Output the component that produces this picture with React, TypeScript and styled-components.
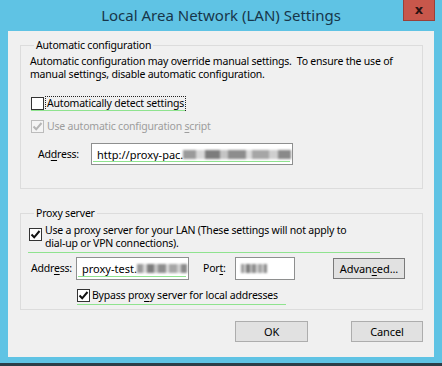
import React from 'react';
import styled, { createGlobalStyle, css } from 'styled-components';

const GlobalStyle = createGlobalStyle`
  html, body {
    margin: 0;
    padding: 0;
    background: #5fc3e4;
  }
  body {
    font-family: "Noto Sans", "Open Sans", sans-serif;
  }
`;

const Window = styled.div`
  width: 442px;
  height: 366px;
  box-sizing: border-box;
  background: #5fc3e4;
  border-bottom: 3px solid #2c3e48;
  display: flex;
  flex-direction: column;
`;

const TitleBar = styled.div`
  height: 31px;
  flex-shrink: 0;
  display: grid;
  grid-template-columns: 1fr auto 1fr;
  align-items: start;
`;

const Title = styled.h1`
  grid-column: 2;
  margin: 0;
  padding-top: 6px;
  font-size: 15px;
  line-height: 18px;
  font-weight: normal;
  color: #17364a;
  white-space: nowrap;
`;

const CloseButton = styled.button`
  grid-column: 3;
  justify-self: end;
  margin: 0 7px 0 0;
  width: 32px;
  height: 21px;
  padding: 0;
  border: 1px solid #9a4038;
  border-top: none;
  background: #c8574b;
  color: #2a1212;
  font: bold 13px/18px "DejaVu Sans", sans-serif;
`;

const Client = styled.div`
  margin: 0 8px;
  height: 326px;
  flex-shrink: 0;
  box-sizing: border-box;
  background: #f0f0f0;
  padding: 8px 11px 0 12px;
  display: flex;
  flex-direction: column;
  font-size: 10.5px;
  letter-spacing: -0.2px;
  line-height: 13px;
  color: #000;
`;

const Group = styled.fieldset<{ $top?: number; $padTop: number; $padBottom: number }>`
  margin: ${(p) => p.$top ?? 0}px 0 0 0;
  min-width: 0;
  border: 1px solid #dcdcdc;
  padding: ${(p) => p.$padTop}px 8px ${(p) => p.$padBottom}px 8px;
  display: flex;
  flex-direction: column;
`;

const Legend = styled.legend`
  margin-left: 5px;
  padding: 0 2px;
  line-height: 13px;
`;

const Description = styled.p`
  margin: 0 0 0 1px;
  white-space: pre;
`;

const Row = styled.div<{ $top: number; $indent?: number; $align?: string }>`
  display: flex;
  align-items: ${(p) => p.$align ?? 'center'};
  margin-top: ${(p) => p.$top}px;
  margin-left: ${(p) => p.$indent ?? 0}px;
`;

// green hand-drawn marks lying over the screenshot
const Marked = styled.div<{ $left: number; $right: number; $bottom: number }>`
  position: relative;
  align-self: flex-start;
  &::after {
    content: '';
    position: absolute;
    left: ${(p) => p.$left}px;
    right: ${(p) => p.$right}px;
    bottom: ${(p) => p.$bottom}px;
    height: 1px;
    background: #8fe38f;
  }
`;

const Box = styled.span<{ $disabled?: boolean; $top?: number }>`
  flex-shrink: 0;
  width: 13px;
  height: 13px;
  box-sizing: border-box;
  margin-top: ${(p) => p.$top ?? 0}px;
  border: 1px solid #333;
  background: #fff;
  display: flex;
  align-items: center;
  justify-content: center;
  ${(p) =>
    p.$disabled &&
    css`
      border-color: #bcbcbc;
      background: #f4f4f4;
    `}
`;

const CheckLabel = styled.span<{ $disabled?: boolean; $focused?: boolean; $gap: number }>`
  margin-left: ${(p) => p.$gap}px;
  color: ${(p) => (p.$disabled ? '#9d9d9d' : '#000')};
  white-space: pre;
  ${(p) =>
    p.$focused &&
    css`
      outline: 1px dotted #222;
      outline-offset: 0;
      padding: 0 1px;
    `}
`;

const Key = styled.span`
  text-decoration: underline;
  text-underline-offset: 2px;
`;

const FieldLabel = styled.span<{ $width: number }>`
  width: ${(p) => p.$width}px;
  flex-shrink: 0;
`;

const TextBox = styled.div<{ $width: number; $height: number }>`
  width: ${(p) => p.$width}px;
  height: ${(p) => p.$height}px;
  box-sizing: border-box;
  border: 1px solid #8e8f8f;
  background: #fff;
  padding-left: 5px;
  display: flex;
  align-items: center;
  white-space: pre;
  overflow: hidden;
  font-size: 11px;
  letter-spacing: 0;
`;

const Blur = styled.span<{ $width: number }>`
  display: inline-block;
  width: ${(p) => p.$width}px;
  height: 9px;
  flex-shrink: 0;
  filter: blur(1.2px);
  background: linear-gradient(
    90deg,
    #9a9a9a 0 12%,
    #d8d8d8 12% 20%,
    #7c7c7c 20% 34%,
    #c4c4c4 34% 42%,
    #8d8d8d 42% 58%,
    #dcdcdc 58% 64%,
    #a6a6a6 64% 80%,
    #cfcfcf 80% 88%,
    #8a8a8a 88% 100%
  );
`;

const Spacer = styled.span<{ $width: number }>`
  width: ${(p) => p.$width}px;
  flex-shrink: 0;
`;

const Button = styled.button<{ $width: number; $dark?: boolean }>`
  width: ${(p) => p.$width}px;
  height: 21px;
  padding: 0;
  margin: 0;
  border: 1px solid ${(p) => (p.$dark ? '#7a7a7a' : '#adadad')};
  background: #e1e1e1;
  font-family: inherit;
  font-size: 11px;
  letter-spacing: -0.1px;
  color: #000;
`;

const ButtonRow = styled.div`
  display: flex;
  justify-content: flex-end;
  gap: 43px;
  margin-top: 11px;
`;

const Check = ({ color }: { color: string }) => (
  <svg width="11" height="11" viewBox="0 0 11 11">
    <path d="M1.5 5.5 L4.2 8.3 L9.5 2" fill="none" stroke={color} strokeWidth="2" />
  </svg>
);

export default function App() {
  return (
    <>
      <GlobalStyle />
      <Window>
        <TitleBar>
          <Title>Local Area Network (LAN) Settings</Title>
          <CloseButton aria-label="Close">x</CloseButton>
        </TitleBar>
        <Client>
          <Group $padTop={3} $padBottom={23}>
            <Legend>Automatic configuration</Legend>
            <Description>
              {'Automatic configuration may override manual settings.  To ensure the use of\nmanual settings, disable automatic configuration.'}
            </Description>
            <Marked $left={2} $right={0} $bottom={-1}>
              <Row $top={16} $indent={2}>
                <Box />
                <CheckLabel $gap={2} $focused>
                  Automatically detect settings
                </CheckLabel>
              </Row>
            </Marked>
            <Row $top={10} $indent={2}>
              <Box $disabled>
                <Check color="#b5b5b5" />
              </Box>
              <CheckLabel $gap={3} $disabled>
                Use automatic configuration <Key>s</Key>cript
              </CheckLabel>
            </Row>
            <Row $top={10} $indent={9}>
              <FieldLabel $width={53}>
                Ad<Key>d</Key>ress:
              </FieldLabel>
              <Marked $left={2} $right={3} $bottom={3}>
                <TextBox $width={202} $height={22}>
                  http://proxy-pac.
                  <Blur $width={108} />
                </TextBox>
              </Marked>
            </Row>
          </Group>

          <Group $top={18} $padTop={4} $padBottom={7}>
            <Legend>Proxy server</Legend>
            <Marked $left={-1} $right={-34} $bottom={-3}>
              <Row $top={0} $align="flex-start">
                <Box $top={4}>
                  <Check color="#111" />
                </Box>
                <CheckLabel $gap={3}>
                  {'Use a proxy server for your LAN (These settings will not apply to\ndial-up or VPN connections).'}
                </CheckLabel>
              </Row>
            </Marked>
            <Row $top={7} $indent={2}>
              <FieldLabel $width={45}>
                Addr<Key>e</Key>ss:
              </FieldLabel>
              <Marked $left={2} $right={3} $bottom={3}>
                <TextBox $width={113} $height={23}>
                  proxy-test.
                  <Blur $width={50} />
                </TextBox>
              </Marked>
              <Spacer $width={14} />
              <FieldLabel $width={32}>
                Por<Key>t</Key>:
              </FieldLabel>
              <TextBox $width={60} $height={23}>
                <Blur $width={26} />
              </TextBox>
              <Spacer $width={38} />
              <Button $width={72} $dark>
                Advan<Key>c</Key>ed...
              </Button>
            </Row>
            <Marked $left={48} $right={-8} $bottom={-3}>
              <Row $top={9} $indent={48}>
                <Box>
                  <Check color="#111" />
                </Box>
                <CheckLabel $gap={2}>
                  Bypass pro<Key>x</Key>y server for local addresses
                </CheckLabel>
              </Row>
            </Marked>
          </Group>

          <ButtonRow>
            <Button $width={73}>OK</Button>
            <Button $width={72}>Cancel</Button>
          </ButtonRow>
        </Client>
      </Window>
    </>
  );
}
